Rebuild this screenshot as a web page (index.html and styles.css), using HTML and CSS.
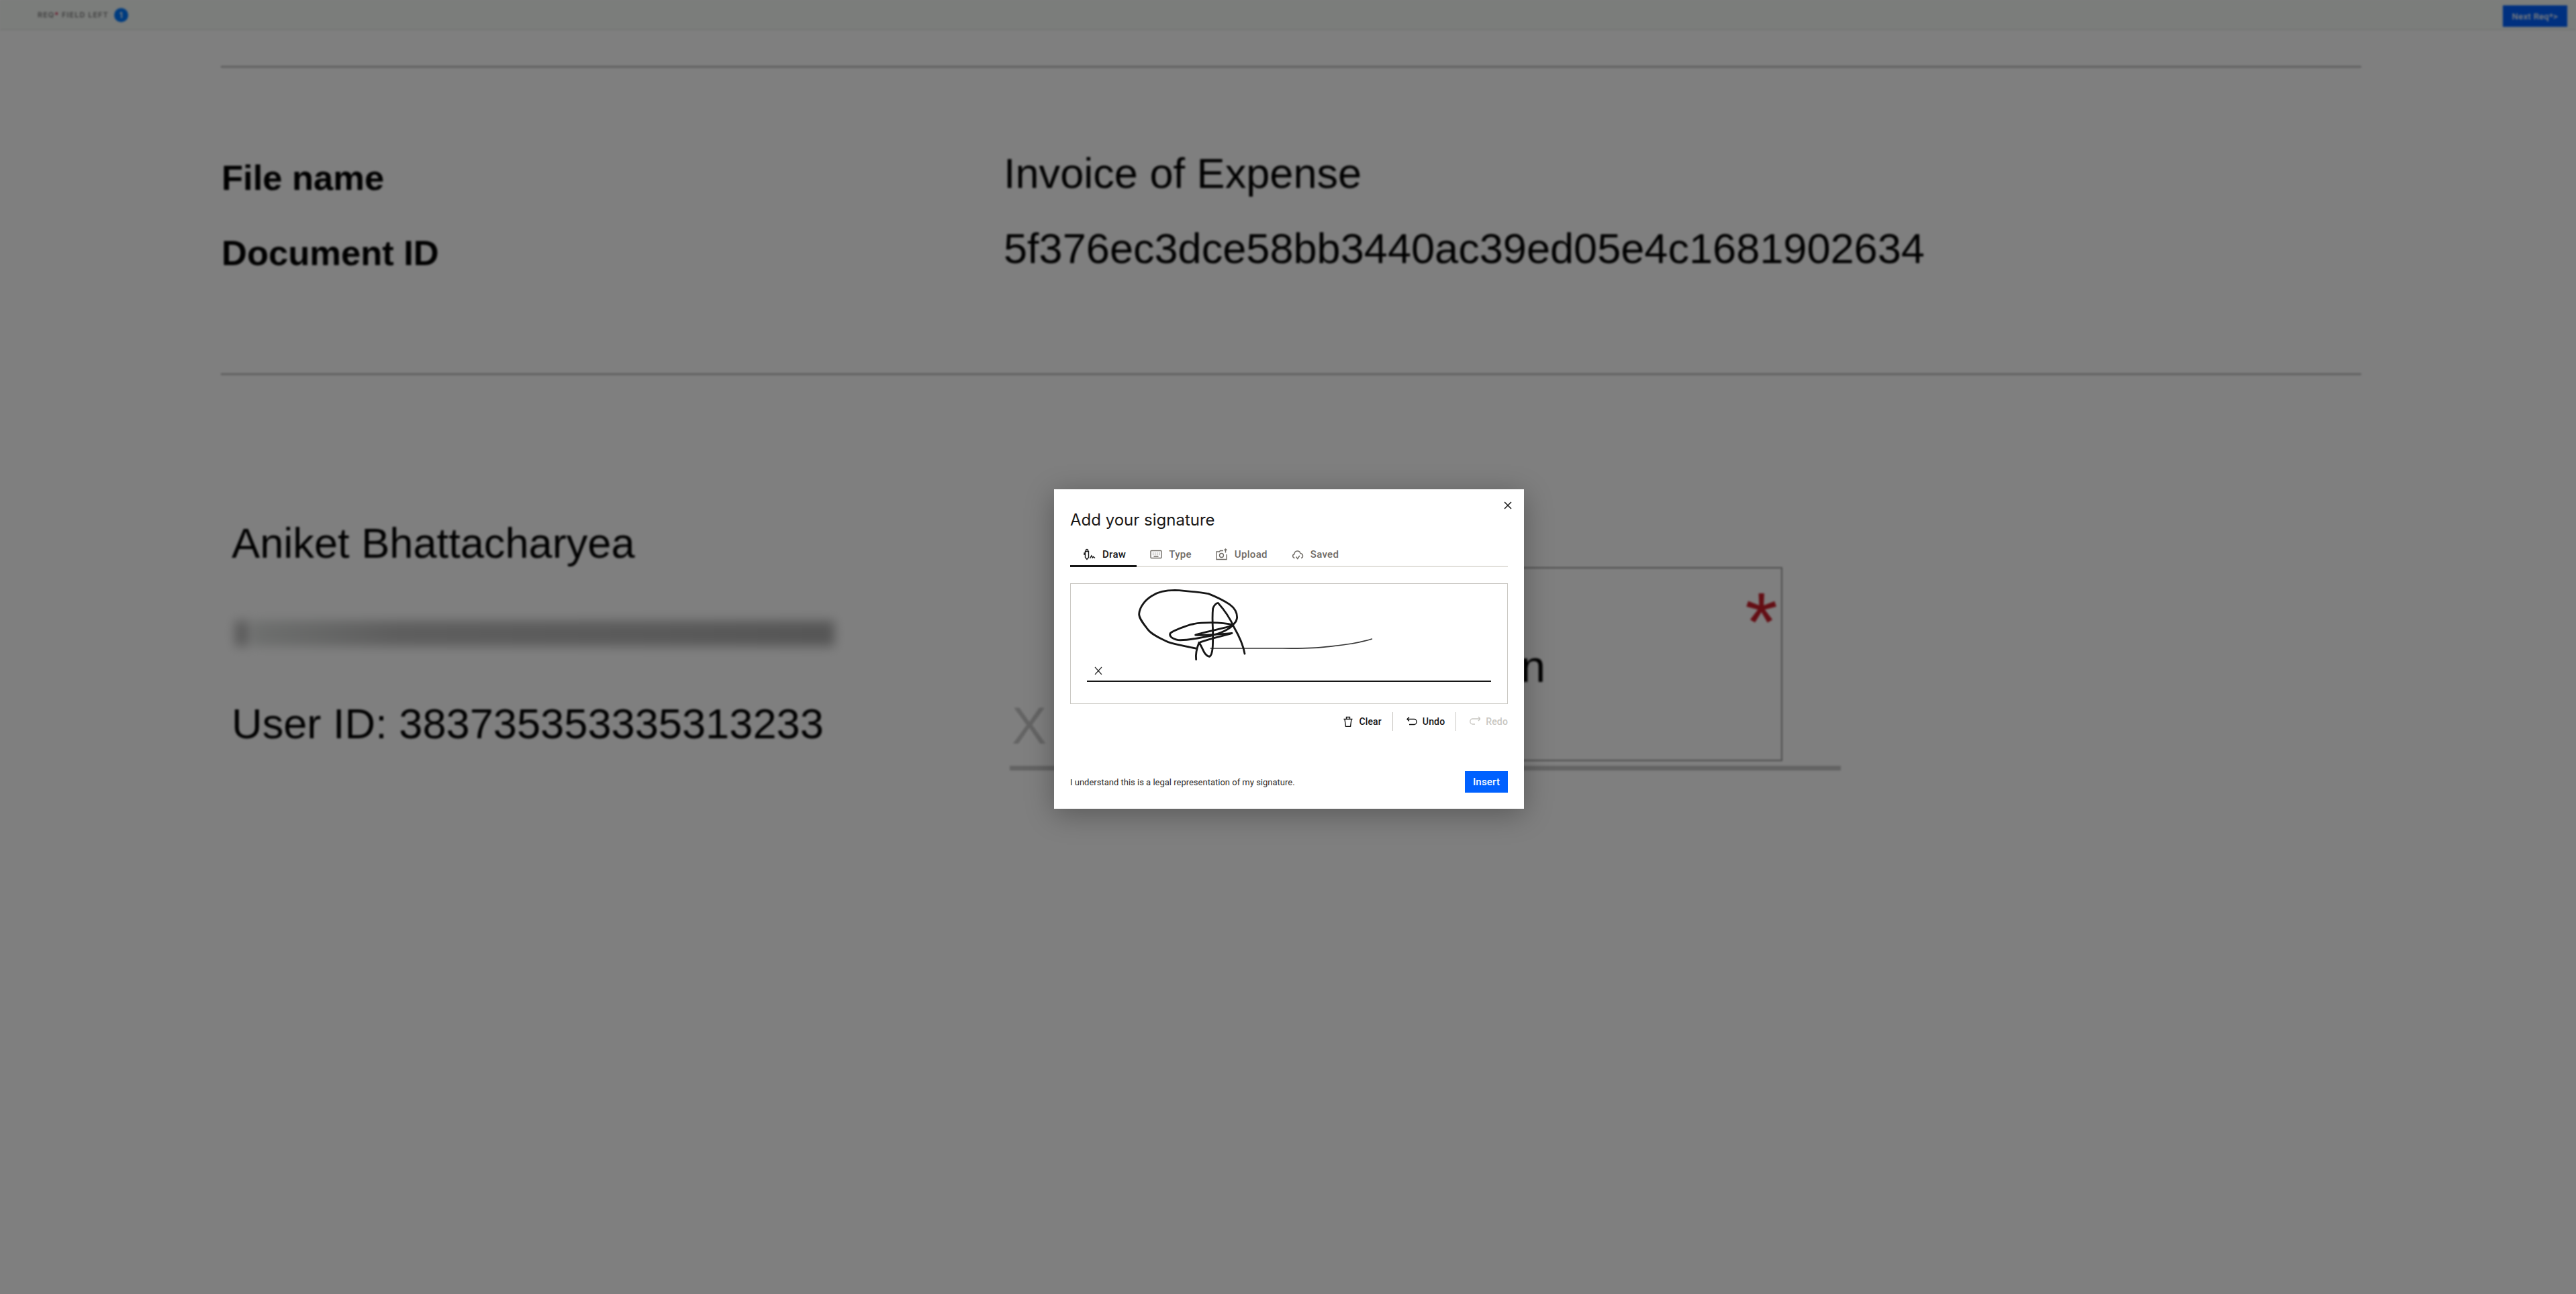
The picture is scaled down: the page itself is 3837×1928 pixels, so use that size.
FILE: index.html
```html
<!DOCTYPE html>
<html lang="en">
<head>
<meta charset="utf-8">
<title>Add your signature</title>
<link rel="stylesheet" href="styles.css">
</head>
<body>
<div class="app">
  <header class="topbar">
    <div class="req"><span class="req-label">REQ<span class="req-star">*</span> FIELD LEFT</span><span class="badge">1</span></div>
    <button class="next">Next Req*&gt;</button>
  </header>
  <main class="doc">
    <hr class="rule rule-first">
    <section class="meta">
      <div class="meta-label">File name</div><div class="meta-value">Invoice of Expense</div>
      <div class="meta-label">Document ID</div><div class="meta-value">5f376ec3dce58bb3440ac39ed05e4c1681902634</div>
    </section>
    <hr class="rule rule-second">
    <section class="signer">
      <div class="who">
        <div class="who-line">Aniket Bhattacharyea</div>
        <div class="redacted"><span class="redacted-dot"></span><span class="redacted-bar"></span></div>
        <div class="who-line who-id">User ID: 383735353335313233</div>
      </div>
      <div class="sign">
        <div class="sign-top">
          <span class="sign-x">X</span>
          <div class="sign-box"><span class="sign-word">Sign</span><span class="sign-star">*</span></div>
        </div>
        <div class="sign-line"></div>
      </div>
    </section>
  </main>
</div>

<div class="overlay">
  <div class="modal">
    <button class="close" aria-label="Close"><svg viewBox="0 0 12 12" class="close-icon"><path d="M1 1l10 10M11 1L1 11"/></svg></button>
    <h1 class="title">Add your signature</h1>
    <nav class="tabs">
      <div class="tab tab-active">
        <svg class="ico" viewBox="0 0 18 18"><path d="M2.500 4.500h5v9l-2.500 3-2.500-3zM3.500 4.500V2.200q1.500-1.400 3 0v2.300M2.500 7h-1.500v3"/><path d="M9.500 15l2.300-4 1.500 3 1.300-1.500 2.400 2"/></svg>
        <span>Draw</span>
      </div>
      <div class="tab">
        <svg class="ico" viewBox="0 0 18 18"><rect x="1" y="3.500" width="16" height="11" rx="1"/><path d="M4 7h1M7 7h1M10 7h1M13 7h1M4 9.500h1M7 9.500h1M10 9.500h1M13 9.500h1M5.500 12h7"/></svg>
        <span>Type</span>
      </div>
      <div class="tab">
        <svg class="ico" viewBox="0 0 18 18"><path d="M11 3.500H6.500L5.500 5H1v11.500h15V9"/><circle cx="8.500" cy="10.500" r="3"/><path d="M14.500 6.500V1M12.500 3l2-2 2 2"/></svg>
        <span>Upload</span>
      </div>
      <div class="tab">
        <svg class="ico" viewBox="0 0 18 18"><path d="M4.500 14.500C1 14 .5 9.500 4 8.500 4.500 3 11.500 2.500 13 7.500c4 .5 5 6 1 7"/><path d="M6.500 12.500l2.300 3 3-4.500"/></svg>
        <span>Saved</span>
      </div>
    </nav>
    <div class="canvas">
      <svg class="signature" viewBox="0 0 1260 480">
        <path class="sig-thin" d="M430 318C520 318 620 318 750 318C830 319 890 319 950 311C1020 303 1080 298 1150 276"/>
        <path class="sig-main" d="M362 318C320 308 280 303 240 290C200 272 165 255 148 232C130 208 110 185 110 165C112 130 140 100 170 82C195 65 225 58 270 58C320 60 380 68 420 74C460 90 490 105 515 122C540 140 548 160 548 180C545 205 530 215 500 224C460 235 400 245 362 258C390 262 470 255 525 250C490 262 440 270 385 290"/>
        <path class="sig-main" d="M530 214C500 205 460 203 430 203C390 203 365 205 340 212C300 225 265 238 250 250C243 262 255 275 285 281C330 284 380 270 430 262C470 252 510 235 530 214"/>
        <path class="sig-main" d="M365 368C362 345 365 325 378 292C395 315 400 352 425 355C442 345 440 290 440 240C438 205 437 170 440 140C445 125 455 115 463 115C490 145 515 180 535 225C558 265 575 300 582 342"/>
      </svg>
      <svg class="canvas-x" viewBox="0 0 12 12"><path d="M1 .5l10 11M11 .5L1 11.500"/></svg>
      <div class="canvas-line"></div>
    </div>
    <div class="tools">
      <div class="tool">
        <svg class="ico tool-ico" viewBox="0 0 16 16"><path d="M1.500 4.500h13M5.500 4.500V1.500h5v3M3 4.500l1.500 11h7l1.500-11"/></svg>
        <span>Clear</span>
      </div>
      <div class="tool">
        <svg class="ico tool-ico" viewBox="0 0 16 16"><path d="M4 1.500L1 4.500l3 3M1 4.500h10.500a3.500 4 0 0 1 0 8H4"/></svg>
        <span>Undo</span>
      </div>
      <div class="tool tool-off">
        <svg class="ico tool-ico" viewBox="0 0 16 16"><path d="M13 1l3 3-3 3M15.500 4H4.500a3.700 4 0 0 0 0 8H8"/></svg>
        <span>Redo</span>
      </div>
    </div>
    <footer class="foot">
      <p class="legal">I understand this is a legal representation of my signature.</p>
      <button class="insert">Insert</button>
    </footer>
  </div>
</div>
</body>
</html>
```
FILE: styles.css
```css
* { box-sizing: border-box; }
html, body { margin: 0; height: 100%; }
body { width: 3837px; height: 1928px; overflow: hidden; background: #fff; position: relative; font-family: "Liberation Sans", Arial, sans-serif; color: #000; }

.app { filter: blur(1.4px); height: 100%; }

.topbar { height: 45px; padding: 8px 13px 0 56px; display: flex; justify-content: space-between; align-items: flex-start; background: #f6faf6; border-bottom: 1px solid #e0e0e0; }
.req { display: flex; align-items: center; gap: 8px; height: 30px; margin-top: -1px; }
.req-label { font: 600 11px/30px "Inter", sans-serif; letter-spacing: 1px; color: #808080; }
.req-star { color: #d0103a; }
.badge { width: 21px; height: 21px; border-radius: 50%; background: #0078ff; color: #fff; display: flex; align-items: center; justify-content: center; font: 600 12px "Inter", sans-serif; }
.next { width: 96px; height: 32px; padding: 0; border: 0; background: #0061ff; color: #fff; font: 500 13px "Roboto", sans-serif; letter-spacing: .3px; }

.doc { padding-left: 329px; }
.rule { display: block; margin: 0; border: 0; background: #c0c0c0; height: 3px; width: 3188px; }
.rule-first { margin-top: 53px; }
.rule-second { margin-top: 137px; }

.meta { margin-top: 122px; display: grid; grid-template-columns: 1166px 1fr; row-gap: 28px; align-items: center; }
.meta-label { font-size: 52.5px; font-weight: 700; line-height: 70px; padding-left: 1px; }
.meta-value { font-size: 63.1px; line-height: 70px; margin-bottom: 14px; }

.signer { display: grid; grid-template-columns: 1175px 1238px; margin-top: 214px; }
.who { padding-left: 16px; }
.who-line { font-size: 63.2px; line-height: 72px; }
.who-id { margin-top: 73px; }
.redacted { margin-top: 74px; width: 900px; height: 50px; padding: 0 2px 0 5px; display: flex; align-items: center; gap: 6px; filter: blur(8px); }
.redacted-dot { width: 20px; height: 38px; background: #b4b4b4; }
.redacted-bar { flex: 1; height: 38px; background: linear-gradient(90deg, #dcdfdd 0, #bcbcbc 25%, #b4b4b4 70%, #acacac 100%); }

.sign { padding-top: 72px; }
.sign-top { display: flex; align-items: flex-end; }
.sign-x { width: 56px; font-size: 78px; line-height: 78px; margin-bottom: 14px; color: #c8c8c8; padding-left: 3px; }
.sign-box { position: relative; margin-left: 40px; width: 1055px; height: 289px; border: 2px solid #989898; padding: 106px 0 0 566px; }
.sign-word { font-size: 67px; line-height: 80px; }
.sign-star { position: absolute; top: 17px; right: 5px; font-size: 125px; line-height: 125px; font-weight: 400; color: #c81c28; }
.sign-line { margin-top: 7px; height: 7px; background: #c6c6c6; }

.overlay { position: absolute; inset: 0; background: rgba(0,0,0,.5); padding: 729px 0 0 1570px; }
.modal { position: relative; width: 700px; height: 476px; padding: 30px 24px 24px; background: #fff; box-shadow: 0 8px 40px rgba(0,0,0,.3); color: #161616; font-family: "Roboto", sans-serif; }
.close { position: absolute; top: 18px; right: 18px; width: 12px; height: 12px; padding: 0; border: 0; background: none; }
.close-icon { display: block; width: 12px; height: 12px; fill: none; stroke: #161616; stroke-width: 1.5; }
.title { margin: 0; font: 400 24px/32px "Inter", sans-serif; letter-spacing: 0; color: #1a1918; }

.tabs { margin-top: 18px; height: 36px; display: flex; box-shadow: inset 0 -2px #e2e0db; }
.tab { height: 36px; padding: 0 16px 2px 20px; display: flex; align-items: center; gap: 10px; font-size: 15px; font-weight: 500; letter-spacing: .3px; color: #6f6b65; }
.tab-active { color: #161616; box-shadow: inset 0 -3px #161616; }
.ico { width: 18px; height: 18px; fill: none; stroke: currentColor; stroke-width: 1.4; flex: none; }

.canvas { position: relative; margin-top: 24px; height: 180px; padding: 123px 24px 0; border: 1px solid #c9c7c2; display: flex; flex-direction: column; }
.signature { position: absolute; left: 65px; top: -10px; width: 420px; height: 160px; fill: none; stroke: #161616; stroke-linecap: round; stroke-linejoin: round; }
.sig-main { stroke-width: 8.5; }
.sig-thin { stroke-width: 5; stroke: #333; }
.canvas-x { display: block; width: 12px; height: 13px; margin-left: 11px; fill: none; stroke: #2a2a2a; stroke-width: 1.2; }
.canvas-line { height: 2px; margin-top: 8px; background: #161616; }

.tools { margin-top: 12px; height: 28px; display: flex; justify-content: flex-end; }
.tool { display: flex; align-items: center; gap: 8px; padding: 0 16px 0 20px; border-right: 1px solid #c9c7c2; font-size: 14px; font-weight: 500; letter-spacing: .15px; color: #161616; }
.tool:last-child { border-right: 0; padding-right: 0; }
.tool-ico { width: 16px; height: 16px; stroke-width: 1.4; }
.tool-off { color: #c9c7c2; }

.foot { margin-top: 60px; height: 32px; display: flex; justify-content: space-between; align-items: center; }
.legal { margin: 0; font-size: 13px; letter-spacing: 0; color: #2f2d2b; }
.insert { width: 64px; height: 32px; padding: 0; border: 0; background: #0061ff; color: #fff; font: 500 15px "Roboto", sans-serif; letter-spacing: .2px; }
```
